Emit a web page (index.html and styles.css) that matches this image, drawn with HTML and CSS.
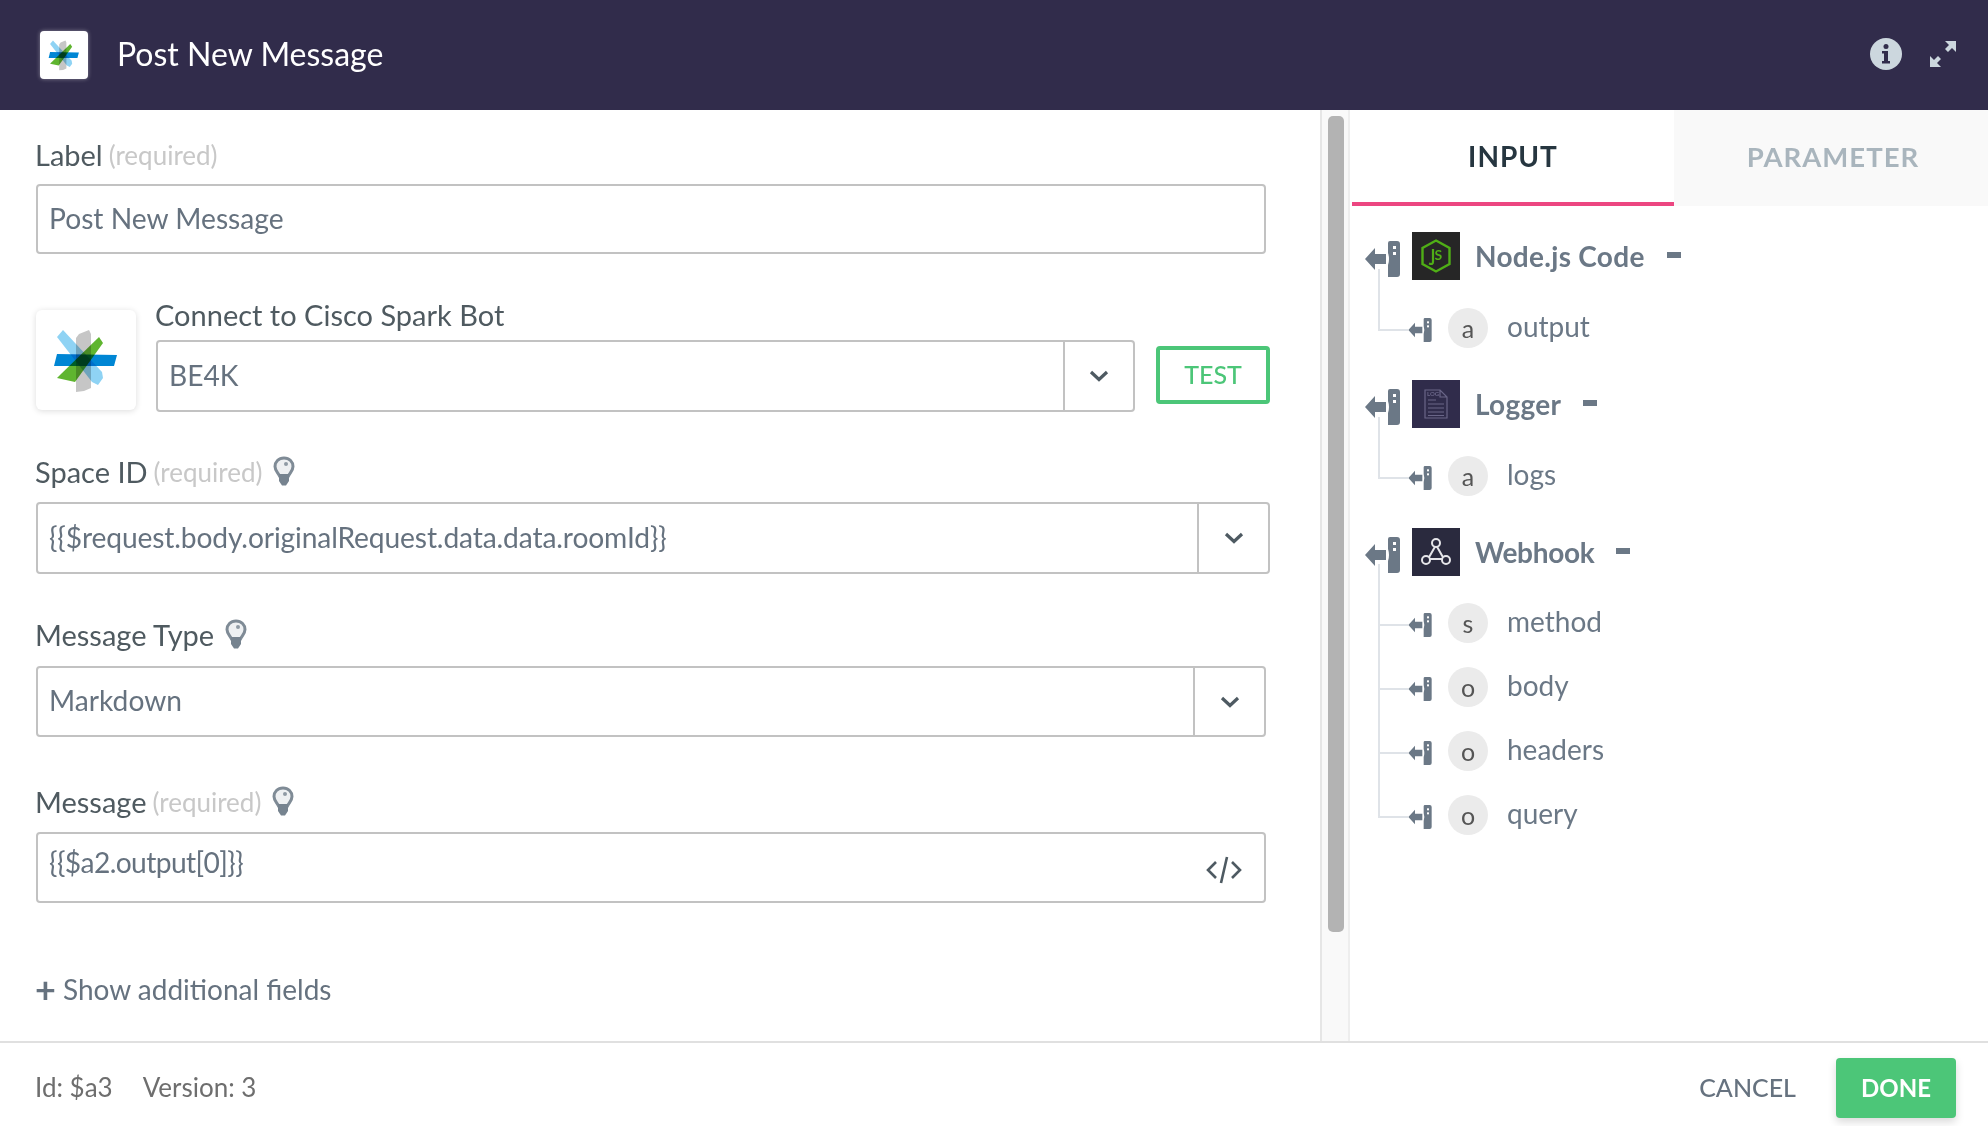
FILE: index.html
```html
<!DOCTYPE html>
<html lang="en">
<head>
    <meta charset="UTF-8">
    <meta name="viewport" content="width=device-width, initial-scale=1.0">
    <title>Post New Message</title>
    <link rel="stylesheet" href="styles.css">
</head>
<body>

    <svg class="defs" width="0" height="0">
        <symbol id="mapIcon" viewBox="0 0 35 36">
            <path d="M0 18 L10 7 V13 H21 V23 H10 V29 Z" fill="#6b7886"/>
            <path d="M25 0 H32 Q35 0 35 3 V33 Q35 36 32 36 H23 V24 Q25 18 23 12 V2 Q23 0 25 0 Z" fill="#6b7886"/>
            <rect x="28" y="5" width="3" height="3" fill="#fff"/>
            <rect x="28" y="11" width="3" height="3" fill="#fff"/>
        </symbol>
        <symbol id="sparkLogo" viewBox="0 0 100 100">
            <path class="bar-light" d="M27 20 L66 62 L67 68 L62 75 L56 72 L21 27 Z"/>
            <path class="bar-gray" d="M43 24 L53 20 L55 24 L55 78 L48 81 L40 82 L40 28 Z"/>
            <path class="bar-green" d="M63 27 L67 33 L39 72 L21 68 L24 65 Z"/>
            <path class="bar-blue" d="M21 44 L81 45 L78 56 L18 56 Z"/>
        </symbol>
        <symbol id="bulb" viewBox="0 0 22 30">
            <path d="M11 2 C5.500 2 2 6 2 10.500 C2 14.500 5 16.500 6.500 20 H15.500 C17 16.500 20 14.500 20 10.500 C20 6 16.500 2 11 2 Z" fill="#eef0f2" stroke="#7f8b96" stroke-width="3"/>
            <path d="M6 18 H16 V25 L13 29.500 H9 L6 25 Z" fill="#76838f"/>
            <circle cx="13" cy="8" r="2" fill="#8f9aa4"/>
        </symbol>
        <symbol id="chevron" viewBox="0 0 20 12">
            <path d="M2 2 L10 9.500 L18 2" fill="none" stroke="#4e5a62" stroke-width="3.200"/>
        </symbol>
    </svg>

    <header class="topbar">
        <div class="app-icon"><svg width="48" height="48"><use href="#sparkLogo"/></svg></div>
        <h1 class="title">Post New Message</h1>
        <div class="top-actions">
            <svg width="34" height="34" viewBox="0 0 34 34">
                <circle cx="17" cy="17" r="16" fill="#ccd7de"/>
                <circle cx="17" cy="9.500" r="2.500" fill="#312c4b"/>
                <path d="M13 14 H19 V24 H21 V26.500 H13 V24 H15 V16.500 H13 Z" fill="#312c4b"/>
            </svg>
            <svg width="28" height="28" viewBox="0 0 28 28">
                <path d="M16 1 H27 V12 L23 8 L19 12 L16 9 L20 5 Z" fill="#ccd7de"/>
                <path d="M12 27 H1 V16 L5 20 L9 16 L12 19 L8 23 Z" fill="#ccd7de"/>
            </svg>
        </div>
    </header>

    <div class="main">
        <section class="form">
            <label class="field-label">Label <span class="req">(required)</span></label>
            <div class="box box-short input-gap">
                <span class="value">Post New Message</span>
            </div>

            <div class="connect">
                <div class="connect-logo"><svg width="100" height="100"><use href="#sparkLogo"/></svg></div>
                <div class="connect-right">
                    <label class="field-label">Connect to Cisco Spark Bot</label>
                    <div class="connect-row">
                        <div class="box box-connect">
                            <span class="value">BE4K</span>
                            <span class="drop drop-connect"><svg width="20" height="12"><use href="#chevron"/></svg></span>
                        </div>
                        <button class="test-btn">TEST</button>
                    </div>
                </div>
            </div>

            <label class="field-label space-label">Space ID <span class="req">(required)</span> <svg class="hint" width="22" height="30"><use href="#bulb"/></svg></label>
            <div class="box select-tall space-box">
                <span class="value">{{$request.body.originalRequest.data.data.roomId}}</span>
                <span class="drop"><svg width="20" height="12"><use href="#chevron"/></svg></span>
            </div>

            <label class="field-label type-label">Message Type <svg class="hint" width="22" height="30"><use href="#bulb"/></svg></label>
            <div class="box box-short select-tall type-box">
                <span class="value">Markdown</span>
                <span class="drop"><svg width="20" height="12"><use href="#chevron"/></svg></span>
            </div>

            <label class="field-label msg-label">Message <span class="req">(required)</span> <svg class="hint" width="22" height="30"><use href="#bulb"/></svg></label>
            <div class="box box-short msg-box">
                <span class="value msg-value">{{$a2.output[0]}}</span>
                <svg class="code-icon" width="36" height="28" viewBox="0 0 36 28">
                    <path d="M10 6 L2 14 L10 22 M26 6 L34 14 L26 22 M21 1 L15 27" fill="none" stroke="#4e5a62" stroke-width="2.600"/>
                </svg>
            </div>

            <div class="more"><span class="plus">+</span>Show additional fields</div>
        </section>

        <div class="scroll"><div class="thumb"></div></div>

        <aside class="side">
            <nav class="tabs">
                <div class="tab active">INPUT</div>
                <div class="tab">PARAMETER</div>
            </nav>
            <div class="tree">
                <div class="node">
                    <div class="head">
                        <svg class="map-big" width="35" height="36"><use href="#mapIcon"/></svg>
                        <span class="node-icon node-js">
                            <svg width="32" height="34" viewBox="0 0 32 34">
                                <path d="M16 1.500 L29.500 9 V25 L16 32.500 L2.500 25 V9 Z" fill="none" stroke="#4fae16" stroke-width="2.400"/>
                                <path d="M13 10 V23 Q13 26 9 24.500" fill="none" stroke="#4fae16" stroke-width="2.200"/>
                                <text x="14.500" y="21" class="js-text">S</text>
                            </svg>
                        </span>
                        <span class="node-name">Node.js Code</span>
                        <span class="dash"></span>
                    </div>
                    <div class="child">
                        <svg class="map-small" width="24" height="24"><use href="#mapIcon"/></svg>
                        <span class="type">a</span>
                        <span class="child-name">output</span>
                    </div>
                </div>

                <div class="node">
                    <div class="head">
                        <svg class="map-big" width="35" height="36"><use href="#mapIcon"/></svg>
                        <span class="node-icon node-log">
                            <svg width="24" height="30" viewBox="0 0 24 30">
                                <path d="M1 1 H16 L23 8 V29 H1 Z M16 1 V8 H23" fill="none" stroke="#6a6688" stroke-width="1.200"/>
                                <text x="3" y="7" class="log-text">LOG</text>
                                <path d="M4 11 H12 M4 15 H20 M4 19 H20 M4 23 H20 M4 26.500 H20" stroke="#6a6688" stroke-width="1.200"/>
                            </svg>
                        </span>
                        <span class="node-name">Logger</span>
                        <span class="dash"></span>
                    </div>
                    <div class="child">
                        <svg class="map-small" width="24" height="24"><use href="#mapIcon"/></svg>
                        <span class="type">a</span>
                        <span class="child-name">logs</span>
                    </div>
                </div>

                <div class="node">
                    <div class="head">
                        <svg class="map-big" width="35" height="36"><use href="#mapIcon"/></svg>
                        <span class="node-icon node-hook">
                            <svg width="32" height="30" viewBox="0 0 32 30">
                                <path d="M8 22 H24" fill="none" stroke="#e6e6ea" stroke-width="2"/>
                                <path d="M16 8 L8 22 M16 8 L24 22" fill="none" stroke="#e6e6ea" stroke-width="2"/>
                                <circle cx="16" cy="6" r="4" fill="#2a2a3e" stroke="#e6e6ea" stroke-width="2"/>
                                <circle cx="6" cy="23" r="4" fill="#2a2a3e" stroke="#e6e6ea" stroke-width="2"/>
                                <circle cx="26" cy="23" r="4" fill="#2a2a3e" stroke="#e6e6ea" stroke-width="2"/>
                            </svg>
                        </span>
                        <span class="node-name">Webhook</span>
                        <span class="dash"></span>
                    </div>
                    <div class="child">
                        <svg class="map-small" width="24" height="24"><use href="#mapIcon"/></svg>
                        <span class="type">s</span>
                        <span class="child-name">method</span>
                    </div>
                    <div class="child">
                        <svg class="map-small" width="24" height="24"><use href="#mapIcon"/></svg>
                        <span class="type">o</span>
                        <span class="child-name">body</span>
                    </div>
                    <div class="child">
                        <svg class="map-small" width="24" height="24"><use href="#mapIcon"/></svg>
                        <span class="type">o</span>
                        <span class="child-name">headers</span>
                    </div>
                    <div class="child">
                        <svg class="map-small" width="24" height="24"><use href="#mapIcon"/></svg>
                        <span class="type">o</span>
                        <span class="child-name">query</span>
                    </div>
                </div>
            </div>
        </aside>
    </div>

    <footer class="bottom">
        <span class="meta">Id: $a3</span>
        <span class="meta">Version: 3</span>
        <button class="cancel-btn">CANCEL</button>
        <button class="done-btn">DONE</button>
    </footer>

</body>
</html>
```

FILE: styles.css
```css
body {
    font-family: Lato, "Open Sans", Arial, sans-serif;
    margin: 0;
    padding: 0;
    width: 1988px;
    height: 1126px;
    overflow: hidden;
    background-color: #fff;
}

.defs {
    position: absolute;
}

.bar-light { fill: #8fd3f4; mix-blend-mode: multiply; }
.bar-gray { fill: #c6c6c6; mix-blend-mode: multiply; }
.bar-green { fill: #5fb52f; mix-blend-mode: multiply; }
.bar-blue { fill: #0086d4; mix-blend-mode: multiply; }

.topbar {
    height: 110px;
    background-color: #312c4b;
    display: flex;
    align-items: center;
    padding: 0 31px 0 40px;
    box-sizing: border-box;
}

.app-icon {
    width: 48px;
    height: 48px;
    background-color: #fff;
    border-radius: 4px;
    box-shadow: 0 0 4px rgba(255, 255, 255, 0.4);
    display: flex;
    align-items: center;
    justify-content: center;
    isolation: isolate;
}

.title {
    margin: 0 0 4px 29px;
    font-size: 32px;
    font-weight: 400;
    color: #fff;
}

.top-actions {
    margin-left: auto;
    margin-bottom: 2px;
    display: flex;
    align-items: center;
    gap: 26px;
}

.main {
    height: 931px;
    display: flex;
}

.form {
    width: 1320px;
    box-sizing: border-box;
    padding: 30px 50px 0 36px;
}

.field-label {
    display: flex;
    align-items: center;
    gap: 6px;
    height: 30px;
    box-sizing: border-box;
    padding-bottom: 2px;
    margin-left: -1px;
    font-size: 29px;
    color: #4f5a60;
}

.req {
    margin-top: 2px;
    font-size: 26px;
    color: #c8c8c8;
}

.box {
    display: flex;
    align-items: center;
    box-sizing: border-box;
    border: 2px solid #c2c2c2;
    border-radius: 4px;
    background-color: #fff;
}

.box-short {
    margin-right: 4px;
}

.input-gap {
    margin-top: 14px;
    height: 70px;
}

.select-tall {
    margin-top: 15px;
    height: 71px;
}

.space-box {
    height: 72px;
}

.space-box .value {
    letter-spacing: -0.130px;
}

.type-box {
    margin-top: 16px;
}

.value {
    flex: 1;
    padding: 0 0 3px 11px;
    font-size: 28.200px;
    color: #66727f;
}

.drop {
    width: 69px;
    align-self: stretch;
    display: flex;
    align-items: center;
    justify-content: center;
    border-left: 2px solid #c2c2c2;
}

.drop-connect {
    width: 68px;
}

.connect {
    display: flex;
    margin-top: 46px;
}

.connect-logo {
    margin-top: 10px;
    width: 100px;
    height: 100px;
    border-radius: 6px;
    box-shadow: 0 1px 6px rgba(0, 0, 0, 0.14);
    isolation: isolate;
}

.connect-right {
    flex: 1;
    margin-left: 20px;
}

.connect-row {
    display: flex;
    align-items: center;
    gap: 21px;
    margin-top: 10px;
}

.box-connect {
    flex: 1;
    height: 72px;
}

.test-btn {
    width: 114px;
    height: 58px;
    margin-top: -2px;
    border: 4px solid #4cc678;
    border-radius: 4px;
    background-color: #fff;
    color: #4cc678;
    font-family: inherit;
    font-size: 25px;
    font-weight: 500;
    padding: 0 0 2px;
}

.space-label {
    margin-top: 45px;
}

.type-label {
    margin-top: 46px;
}

.msg-label {
    margin-top: 50px;
}

.msg-box {
    margin-top: 15px;
    height: 71px;
}

.msg-value {
    align-self: flex-start;
    padding-top: 11px;
    letter-spacing: -0.600px;
}

.code-icon {
    margin: 4px 22px 0 0;
}

.more {
    display: flex;
    align-items: center;
    margin-top: 71px;
    height: 30px;
    font-size: 28px;
    color: #66727f;
}

.plus {
    width: 28px;
    margin-left: -1px;
    font-size: 36px;
    font-weight: 700;
    line-height: 30px;
}

.scroll {
    width: 30px;
    box-sizing: border-box;
    border-left: 2px solid #e6e6e6;
    border-right: 2px solid #eeeeee;
    background-color: #f9f9f9;
    padding: 6px 4px 0 6px;
}

.thumb {
    height: 816px;
    background-color: #b3b3b3;
    border-radius: 5px;
}

.side {
    flex: 1;
}

.tabs {
    display: flex;
    height: 96px;
    padding-left: 2px;
}

.tab {
    box-sizing: border-box;
    flex: 1;
    display: flex;
    align-items: center;
    justify-content: center;
    padding-bottom: 4px;
    background-color: #f9f9f9;
    font-size: 28px;
    font-weight: 700;
    letter-spacing: 1px;
    color: #a9b5bd;
}

.tab:last-child {
    font-size: 27.500px;
    padding-left: 4px;
}

.tab.active {
    flex: 0 0 322px;
    background-color: #fff;
    color: #263640;
    border-bottom: 4px solid #ec4681;
    padding-bottom: 0;
}

.tree {
    padding: 26px 0 0 15px;
}

.node {
    margin-bottom: 32px;
}

.head {
    display: flex;
    align-items: center;
    height: 48px;
}

.map-big {
    margin-top: 6px;
}

.node-icon {
    width: 48px;
    height: 48px;
    margin-left: 12px;
    display: flex;
    align-items: center;
    justify-content: center;
}

.node-js { background-color: #262626; }
.node-log { background-color: #302c4b; }
.node-hook { background-color: #2a2a3e; }

.js-text {
    font-family: Lato, sans-serif;
    font-size: 14px;
    font-weight: 700;
    fill: #4fae16;
}

.log-text {
    font-family: Lato, sans-serif;
    font-size: 6px;
    font-weight: 700;
    fill: #6a6688;
}

.node-name {
    margin-left: 15px;
    font-size: 28px;
    font-weight: 700;
    letter-spacing: 0.300px;
    color: #6b7886;
}

.node:last-child .node-name {
    letter-spacing: -0.300px;
}

.dash {
    width: 14px;
    height: 6px;
    margin: -2px 0 0 22px;
    background-color: #6b7886;
}

.child {
    position: relative;
    display: flex;
    align-items: center;
    height: 40px;
    margin-top: 28px;
    padding-left: 43px;
}

.child + .child {
    margin-top: 24px;
}

.node:last-child .head + .child {
    margin-top: 27px;
}

.child::before {
    content: "";
    position: absolute;
    left: 13px;
    bottom: 17px;
    width: 28px;
    height: 60px;
    border-left: 2px solid #dfe3e8;
    border-bottom: 2px solid #dfe3e8;
}

.child + .child::before {
    height: 64px;
}

.map-small {
    position: relative;
    margin-top: 4px;
}

.type {
    width: 40px;
    height: 40px;
    margin-left: 16px;
    border-radius: 50%;
    background-color: #ebebeb;
    display: flex;
    align-items: center;
    justify-content: center;
    font-size: 25px;
    color: #555;
}

.child-name {
    margin-left: 19px;
    padding-bottom: 4px;
    font-size: 28px;
    color: #6b7886;
}

.bottom {
    height: 85px;
    box-sizing: border-box;
    border-top: 2px solid #e0e0e0;
    display: flex;
    align-items: center;
    padding: 7px 32px 0 35px;
    gap: 30px;
}

.meta {
    margin-bottom: 2px;
    font-size: 26px;
    color: #6e6e6e;
}

.cancel-btn {
    margin: 0 0 2px auto;
    padding: 0;
    border: none;
    background: none;
    font-family: inherit;
    font-size: 25px;
    font-weight: 500;
    color: #66727f;
}

.done-btn {
    width: 120px;
    height: 60px;
    margin-left: 10px;
    padding: 0 0 2px;
    border: none;
    border-radius: 4px;
    background-color: #4cc678;
    box-shadow: 0 4px 8px rgba(0, 0, 0, 0.15);
    color: #fff;
    font-family: inherit;
    font-size: 24px;
    font-weight: 700;
}

.hint {
    flex-shrink: 0;
    margin: -1px 0 0 5px;
}
```
